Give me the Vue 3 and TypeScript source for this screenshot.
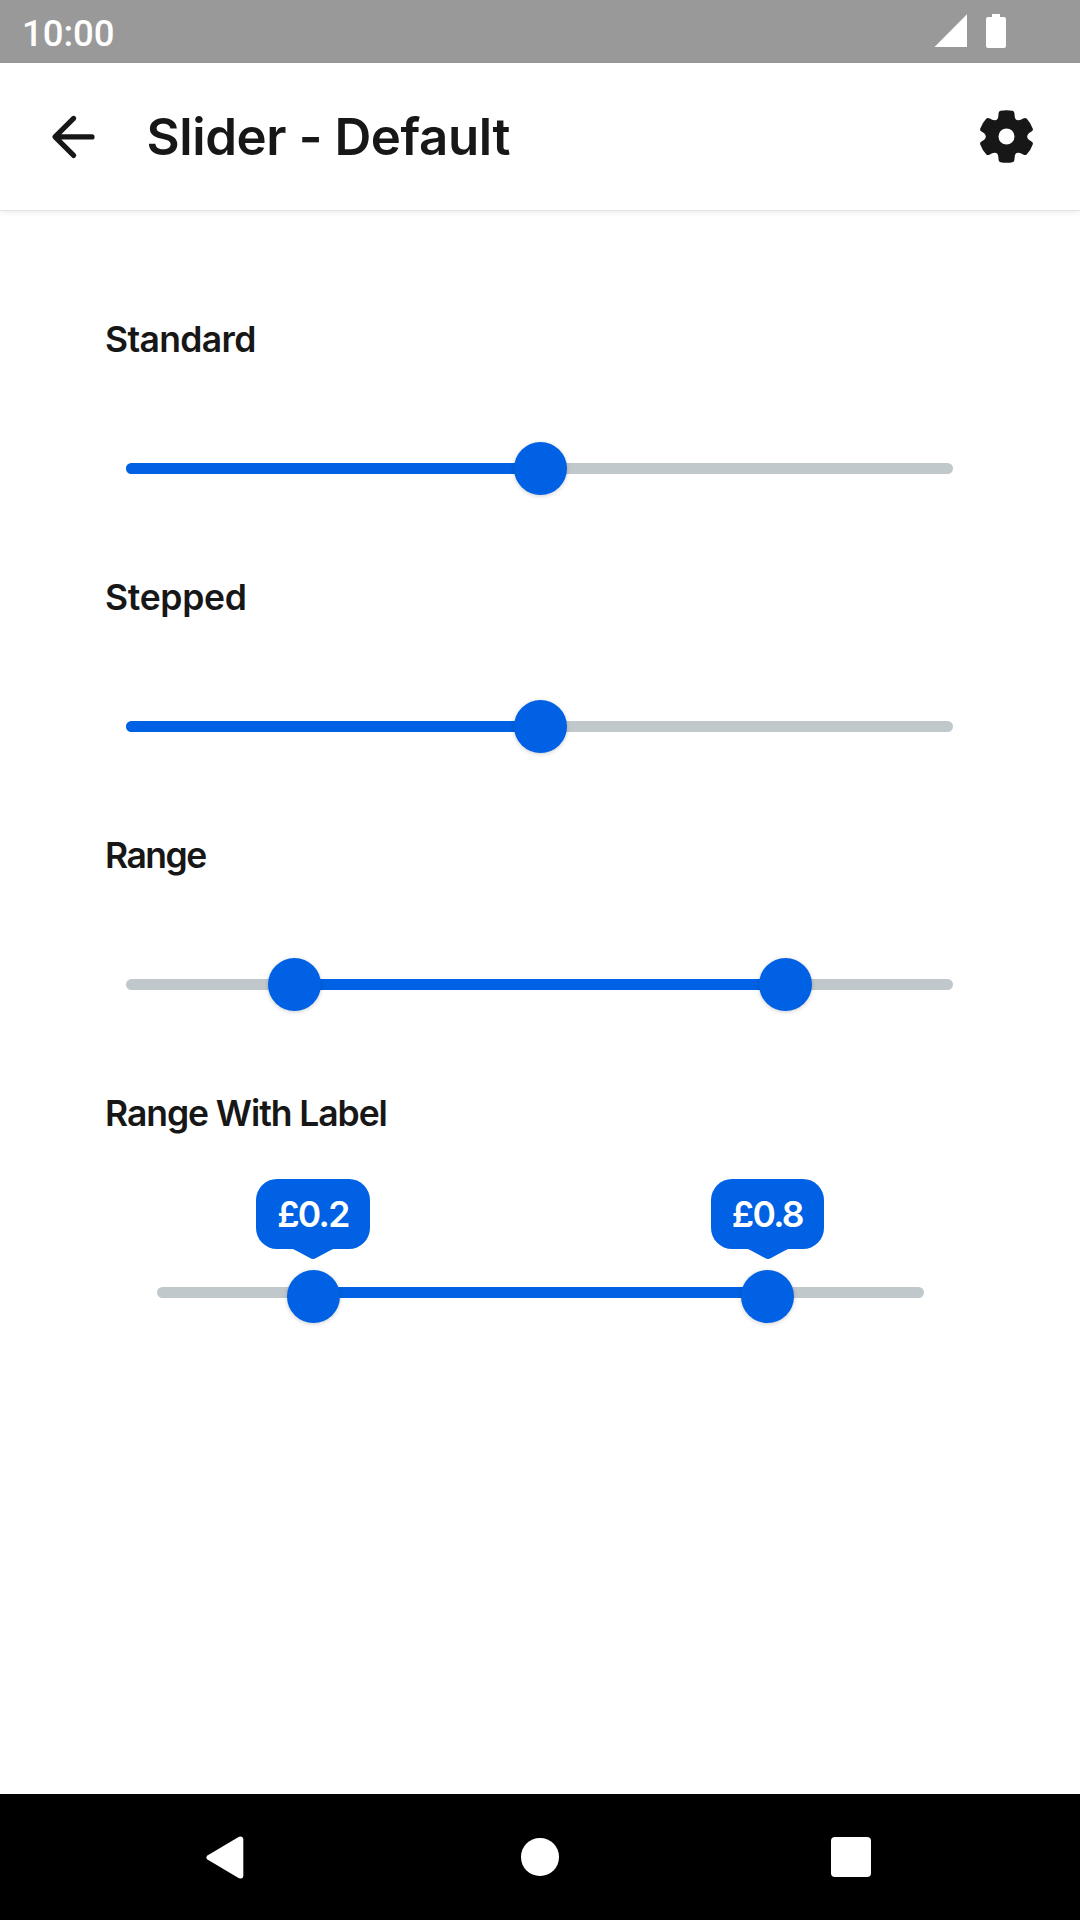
<script setup lang="ts">
interface Thumb {
  at: number
  text?: string
  bubbleLeft?: number
  bubbleWidth?: number
}

interface SliderRow {
  title: string
  tracking: number
  width: number
  from: number
  to: number
  labelled?: boolean
  thumbs: Thumb[]
}

const rows: SliderRow[] = [
  { title: 'Standard', tracking: -0.65, width: 827, from: 0, to: 414, thumbs: [{ at: 414 }] },
  { title: 'Stepped', tracking: -0.3, width: 827, from: 0, to: 414, thumbs: [{ at: 414 }] },
  { title: 'Range', tracking: -1.5, width: 827, from: 168, to: 659, thumbs: [{ at: 168.3 }, { at: 659.3 }] },
  {
    title: 'Range With Label',
    tracking: -1.07,
    width: 767,
    from: 156,
    to: 610,
    labelled: true,
    thumbs: [
      { at: 156.5, text: '£0.2', bubbleLeft: 99, bubbleWidth: 114 },
      { at: 610.5, text: '£0.8', bubbleLeft: 554, bubbleWidth: 113 },
    ],
  },
]
</script>

<template>
  <div class="screen">
    <div class="status">
      <span class="clock">10:00</span>
      <svg class="signal" width="34" height="34" viewBox="0 0 34 34"><path d="M0.5 33 L33 0.3 V33 Z" fill="#fff" /></svg>
      <svg class="battery" width="20" height="34" viewBox="0 0 20 34">
        <path d="M6 0 H14 V3 H18 Q20 3.2 20 5 V32 Q20 34 18 34 H2 Q0 34 0 32 V5 Q0 3.2 2 3 H6 Z" fill="#fff" />
      </svg>
    </div>

    <header class="appbar">
      <svg class="back" width="46" height="46" viewBox="0 0 46 46" fill="none" stroke="#171717" stroke-width="5.2" stroke-linecap="round" stroke-linejoin="round">
        <path d="M23.6 4.4 L5 22.9 L23.6 41.4 M5.3 22.9 H42" />
      </svg>
      <h1>Slider - Default</h1>
      <svg class="gear" width="54" height="53" viewBox="240.5 329.5 162 159">
        <path
          fill="#171717"
          fill-rule="evenodd"
          d="M302 332 Q320 329 338 332 Q343 333 343.5 338 L345 351 Q347 361 356 360 Q363 360 370 355 Q377 351 381 356 Q393 369 399 386 Q400 391 396 393 L387 399 Q377 409 387 419 L396 425 Q400 427 399 432 Q393 449 381 462 Q377 467 370 463 Q363 458 356 458 Q347 457 345 467 L343.5 480 Q343 485 338 486 Q320 489 302 486 Q297 485 296.5 480 L295 467 Q293 457 284 458 Q277 458 270 463 Q263 467 259 462 Q247 449 241 432 Q240 427 244 425 L253 419 Q263 409 253 399 L244 393 Q240 391 241 386 Q247 369 259 356 Q263 351 270 355 Q277 360 284 360 Q293 361 295 351 L296.5 338 Q297 333 302 332 Z M320 385 A24 24 0 1 0 320 433 A24 24 0 1 0 320 385 Z"
        />
      </svg>
    </header>

    <main>
      <section v-for="row in rows" :key="row.title" :class="{ labelled: row.labelled }">
        <h2 :style="{ letterSpacing: row.tracking + 'px' }">{{ row.title }}</h2>
        <div class="slider" :style="{ width: row.width + 'px' }">
          <div class="track">
            <div class="fill" :class="{ start: row.from === 0 }" :style="{ marginLeft: row.from + 'px', width: row.to - row.from + 'px' }"></div>
          </div>
          <template v-for="thumb in row.thumbs" :key="thumb.at">
            <div class="thumb" :style="{ left: thumb.at + 'px' }"></div>
            <div v-if="thumb.text" class="bubble" :style="{ left: thumb.bubbleLeft + 'px', width: thumb.bubbleWidth + 'px' }">
              <span>{{ thumb.text }}</span>
              <svg class="tip" width="48" height="12" viewBox="0 0 48 12">
                <path d="M0 0 H48 V0.6 Q44 0.6 41 2.4 L27 10 Q24 11.8 21 10 L7 2.4 Q4 0.6 0 0.6 Z" fill="#0061e4" />
              </svg>
            </div>
          </template>
        </div>
      </section>
    </main>

    <nav class="navbar">
      <svg width="38" height="43" viewBox="0 0 38 43">
        <path d="M1.4 19.4 L33 0.8 Q37 -0.6 37.3 3 V40 Q37 43.6 33 42.2 L1.4 23.6 Q-0.7 21.5 1.4 19.4 Z" fill="#fff" />
      </svg>
      <span class="home"></span>
      <span class="recent"></span>
    </nav>
  </div>
</template>

<style>
body {
  margin: 0;
  background: #fff;
}
</style>

<style scoped>
.screen {
  width: 1080px;
  height: 1920px;
  display: flex;
  flex-direction: column;
  background: #fff;
  color: #171717;
  font-family: "Inter", sans-serif;
  overflow: hidden;
}
.status {
  height: 63px;
  flex: none;
  box-sizing: border-box;
  padding: 0 74px 0 22px;
  display: flex;
  align-items: flex-start;
  background: #999;
}
.clock {
  margin-top: 12px;
  flex: 1;
  font: 500 36.5px/43px "Roboto", sans-serif;
  color: #fff;
}
.signal {
  margin-top: 14px;
}
.battery {
  margin: 14px 0 0 18px;
}
.appbar {
  height: 147px;
  flex: none;
  box-sizing: border-box;
  padding: 0 46px 0 50px;
  display: flex;
  align-items: center;
  box-shadow: 0 1px 0 #e3e3e3, 0 2px 6px rgba(0, 0, 0, 0.09);
}
h1 {
  margin: 0 0 0 50.5px;
  flex: 1;
  font-size: 51px;
  font-weight: 600;
  line-height: 61px;
  letter-spacing: -0.4px;
}
main {
  flex: 1;
  padding: 108px 105px 0;
}
section {
  height: 258px;
}
h2 {
  margin: 0;
  font-size: 35.5px;
  font-weight: 600;
  line-height: 43px;
}
.slider {
  position: relative;
  margin: 81px 0 0 21px;
  height: 53px;
  display: flex;
  align-items: center;
}
.labelled .slider {
  margin: 131px 0 0 52px;
}
.track {
  width: 100%;
  height: 11px;
  border-radius: 5.5px;
  background: #c1c8cb;
}
.fill {
  height: 11px;
  background: #0061e4;
}
.fill.start {
  border-radius: 5.5px 0 0 5.5px;
}
.thumb {
  position: absolute;
  top: 0;
  width: 53px;
  height: 53px;
  margin-left: -26.5px;
  border-radius: 50%;
  background: #0061e4;
  box-shadow: 0 1px 4px rgba(0, 0, 0, 0.2);
}
.labelled .thumb {
  top: 4px;
}
.bubble {
  position: absolute;
  top: -87px;
  height: 69.5px;
  box-sizing: border-box;
  padding-top: 14px;
  border-radius: 21px;
  background: #0061e4;
  color: #fff;
  font-size: 35.5px;
  font-weight: 600;
  line-height: 43px;
  letter-spacing: -1.7px;
  text-align: center;
}
.bubble span {
  margin-right: 0.3px;
}
.tip {
  position: absolute;
  top: 69px;
  left: 50%;
  margin-left: -24px;
}
.navbar {
  height: 126px;
  flex: none;
  box-sizing: border-box;
  padding: 0 209px 0 206px;
  display: flex;
  align-items: center;
  justify-content: space-between;
  background: #000;
}
.home {
  width: 37.5px;
  height: 37.5px;
  margin-left: 4.5px;
  border-radius: 50%;
  background: #fff;
}
.recent {
  width: 40px;
  height: 40px;
  border-radius: 4px;
  background: #fff;
}
</style>
